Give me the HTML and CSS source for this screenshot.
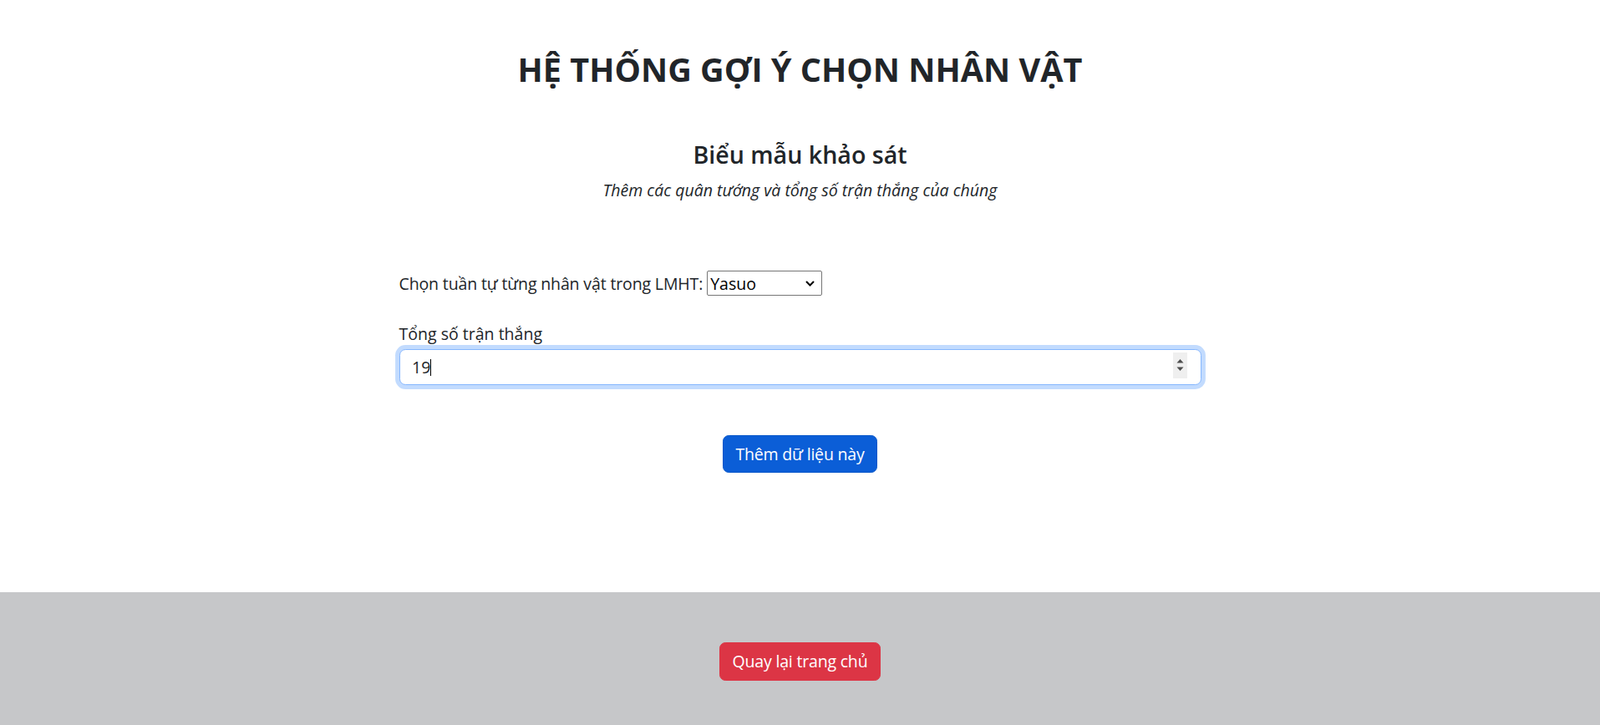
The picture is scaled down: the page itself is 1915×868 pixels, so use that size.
FILE: index.html
```html
<!DOCTYPE html>
<html lang="vi">
<head>
<meta charset="utf-8">
<title>Hệ thống gợi ý chọn nhân vật</title>
<link rel="stylesheet" href="styles.css">
</head>
<body>
<main class="page">
  <header class="intro">
    <h1 class="title">HỆ THỐNG GỢI Ý CHỌN NHÂN VẬT</h1>
    <h2 class="subtitle">Biểu mẫu khảo sát</h2>
    <p class="note">Thêm các quân tướng và tổng số trận thắng của chúng</p>
  </header>
  <form class="survey">
    <div class="field-inline">
      <label for="champ" class="inline-label">Chọn tuần tự từng nhân vật trong LMHT:</label>
      <select id="champ" class="champ-select">
        <option>Yasuo</option>
        <option>Zed</option>
        <option>Ahri</option>
      </select>
    </div>
    <div class="field">
      <label for="wins" class="field-label">Tổng số trận thắng</label>
      <div class="input-wrap">
        <input id="wins" class="wins-input" type="number" value="19">
        <span class="caret" aria-hidden="true"></span>
        <span class="spinner" aria-hidden="true">
          <svg width="11" height="20" viewBox="0 0 11 20"><path d="M1.5 7.5L5.5 3l4 4.5z" fill="#4d4d4d"/><path d="M1.5 12.5L5.5 17l4-4.5z" fill="#4d4d4d"/></svg>
        </span>
      </div>
    </div>
    <div class="actions">
      <button type="button" class="btn btn-primary">Thêm dữ liệu này</button>
    </div>
  </form>
</main>
<footer class="footer">
  <a href="#" class="btn btn-danger">Quay lại trang chủ</a>
</footer>
</body>
</html>
```
FILE: styles.css
```css
* { box-sizing: border-box; }
html, body { margin: 0; padding: 0; }
body {
  font-family: "Open Sans", "Noto Sans", "Liberation Sans", sans-serif;
  font-size: 19.54px;
  line-height: 1.5;
  color: #212529;
  background: #fff;
  overflow: hidden;
}
.page {
  height: 709px;
  padding-top: 60px;
}
.intro { text-align: center; }
.title {
  margin: 0;
  font-size: 39.6px;
  line-height: 1.2;
  font-weight: 700;
  letter-spacing: 0;
}
.subtitle {
  margin: 60.7px 0 0;
  font-size: 28.6px;
  line-height: 1.2;
  font-weight: 600;
}
.note {
  margin: 10.6px 0 0;
  font-style: italic;
}
.survey {
  width: 960px;
  margin: 82px auto 0;
}
.field-inline {
  display: flex;
  align-items: center;
  gap: 5px;
  height: 30px;
}
.inline-label { letter-spacing: -0.15px; }
.champ-select {
  width: 138px;
  height: 30px;
  font-family: inherit;
  font-size: 19.54px;
  color: #000;
  background: #fff;
  border: 1px solid #767676;
  border-radius: 2px;
  padding: 0 0 0 3px;
  appearance: none;
  -webkit-appearance: none;
  background-image: url("data:image/svg+xml;utf8,<svg xmlns='http://www.w3.org/2000/svg' width='11' height='7' viewBox='0 0 11 7'><path d='M1 1l4.5 4.5L10 1' fill='none' stroke='black' stroke-width='2'/></svg>");
  background-repeat: no-repeat;
  background-position: right 8px center;
  background-size: 11px 7px;
}
.field { margin-top: 30.8px; }
.field-label {
  display: block;
  margin-bottom: 3px;
}
.input-wrap { position: relative; }
.wins-input {
  display: block;
  width: 100%;
  height: 43px;
  padding: 0 14.6px;
  font-family: inherit;
  font-size: 19.54px;
  color: #212529;
  background: #fff;
  border: 1px solid #86b7fe;
  border-radius: 7.3px;
  outline: none;
  box-shadow: 0 0 0 4.9px rgba(13, 110, 253, 0.25);
  -moz-appearance: textfield;
}
.wins-input::-webkit-inner-spin-button,
.wins-input::-webkit-outer-spin-button {
  -webkit-appearance: none;
  margin: 0;
}
.caret {
  position: absolute;
  left: 37px;
  top: 12px;
  width: 1px;
  height: 20px;
  background: #000;
}
.spinner {
  position: absolute;
  right: 17px;
  top: 4px;
  width: 17px;
  height: 31px;
  background: #efefef;
  display: flex;
  align-items: center;
  justify-content: center;
}
.actions {
  margin-top: 60px;
  text-align: center;
}
.btn {
  display: inline-block;
  font-family: inherit;
  font-size: 19.54px;
  line-height: 1.5;
  padding: 7.3px 14.6px;
  border: 1px solid transparent;
  border-radius: 7.3px;
  color: #fff;
  text-decoration: none;
  cursor: pointer;
  letter-spacing: -0.2px;
}
.btn-primary {
  background: #0b5ed7;
  border-color: #0a58ca;
}
.btn-danger {
  background: #dc3545;
  border-color: #dc3545;
}
.footer {
  height: 159px;
  padding-top: 60px;
  background: #c6c7c9;
  text-align: center;
}
```
